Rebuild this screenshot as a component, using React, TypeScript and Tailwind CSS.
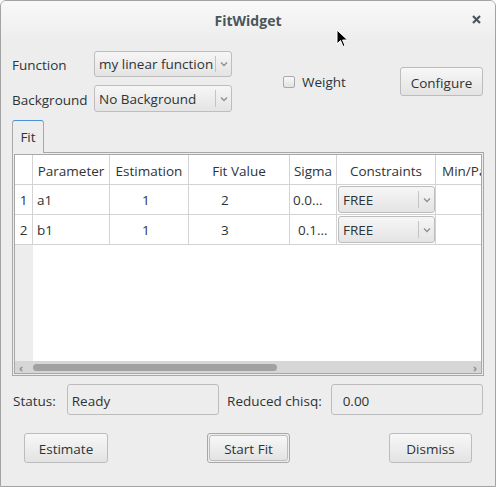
import React from 'react'

const font = { fontFamily: '"Open Sans", "DejaVu Sans", sans-serif' }

function Chevron() {
  return (
    <svg width="8" height="6" viewBox="0 0 8 6" className="text-[#8a8f91]">
      <path d="M1 1.5 L4 4.5 L7 1.5" fill="none" stroke="currentColor" strokeWidth="1.3" />
    </svg>
  )
}

function Combo({ text, className = '' }: { text: string; className?: string }) {
  return (
    <div
      className={`flex items-center rounded-[3px] border border-[#bdbdbd] bg-gradient-to-b from-[#f6f6f6] to-[#e4e4e4] ${className}`}
    >
      <span className="flex-1 whitespace-nowrap pl-[4px] pt-[2px] text-[13.5px] leading-none text-[#2e3436]">{text}</span>
      <span className="h-[70%] w-px bg-[#c4c4c4]" />
      <span className="flex w-[15px] items-center justify-center">
        <Chevron />
      </span>
    </div>
  )
}

function Button({ label, isDefault = false, className = '' }: { label: string; isDefault?: boolean; className?: string }) {
  return (
    <div className={`rounded-[3px] ${isDefault ? 'border border-[#a8a8a8] p-px' : ''} ${className}`}>
      <div className="flex h-full w-full items-center justify-center rounded-[3px] border border-[#bcbcbc] bg-gradient-to-b from-[#f7f7f7] to-[#e3e3e3] pt-[3px] text-[13.5px] text-[#2e3436]">
        {label}
      </div>
    </div>
  )
}

const cols = [
  { label: 'Parameter', w: 'w-[77px]' },
  { label: 'Estimation', w: 'w-[79px]' },
  { label: 'Fit Value', w: 'w-[101px]' },
  { label: 'Sigma', w: 'w-[47px]' },
  { label: 'Constraints', w: 'w-[99px]' },
  { label: 'Min/Parameter', w: 'w-[60px]' },
]

const rows = [
  { n: '1', name: 'a1', est: '1', fit: '2', sigma: '0.0...', sigmaPad: 'pl-[3px]' },
  { n: '2', name: 'b1', est: '1', fit: '3', sigma: '0.1...', sigmaPad: 'pl-[8px]' },
]

export default function App() {
  return (
    <div style={font} className="relative h-[487px] w-[496px] overflow-hidden rounded-t-[6px] border border-[#a3a3a3] bg-[#ededed] text-[#2e3436]">
      {/* title bar */}
      <div className="relative flex h-[40px] items-center justify-center bg-gradient-to-b from-[#f9f9f9] to-[#ededed]">
        <span className="pb-[2px] text-[14px] font-bold text-[#4b565c]">FitWidget</span>
        <svg className="absolute left-[471px] top-[14px]" width="9" height="9" viewBox="0 0 9 9">
          <path d="M1 1 L8 8 M8 1 L1 8" stroke="#4b565c" strokeWidth="2.2" />
        </svg>
        {/* mouse pointer */}
        <svg className="absolute left-[335px] top-[28px]" width="14" height="20" viewBox="0 0 14 20">
          <path d="M1 1 L1 15 L4.5 11.5 L7 17.5 L9 16.6 L6.6 11 L11.5 11 Z" fill="#000" stroke="#fff" strokeWidth="1" />
        </svg>
      </div>

      {/* function / background */}
      <div className="flex items-center pl-[11px] pr-[12px] pt-[10px]">
        <div className="flex flex-col gap-[8px]">
          <div className="flex items-center">
            <span className="w-[82px] pt-[3px] text-[13.5px]">Function</span>
            <Combo text="my linear function" className="h-[26px] w-[138px]" />
          </div>
          <div className="flex items-center">
            <span className="w-[82px] pt-[3px] text-[13.5px]">Background</span>
            <Combo text="No Background" className="h-[27px] w-[138px]" />
          </div>
        </div>
        <div className="ml-[51px] flex items-center gap-[7px]">
          <span className="h-[12px] w-[12px] rounded-[2px] border border-[#a9a9a9] bg-gradient-to-b from-[#f8f8f8] to-[#e2e2e2]" />
          <span className="pt-[2px] text-[13.5px]">Weight</span>
        </div>
        <Button label="Configure" className="ml-auto h-[29px] w-[83px]" />
      </div>

      {/* tab */}
      <div className="mt-[8px] px-[11px]">
        <div className="relative z-10 -mb-px flex h-[33px] w-[32px] items-center justify-center rounded-t-[3px] border border-b-0 border-[#a8a8a8] border-t-[#4a90d9] bg-[#ededed] pt-[1px] text-[13.5px]">
          Fit
        </div>
        <div className="h-[224px] w-[472px] border border-[#a8a8a8] p-px">
          <div className="flex h-full w-full flex-col border border-[#a8a8a8] bg-white">
            <div className="flex flex-1 overflow-hidden">
              {/* vertical header */}
              <div className="flex w-[18px] shrink-0 flex-col bg-[#ededed]">
                <div className="h-[30px] border-b border-r border-[#d3d3d3] bg-white" />
                {rows.map((r) => (
                  <div key={r.n} className="flex h-[30px] items-center justify-center border-b border-r border-[#d3d3d3] bg-white pt-[2px] text-[13.5px]">
                    {r.n}
                  </div>
                ))}
              </div>
              <div className="flex flex-col">
                <div className="flex h-[30px]">
                  {cols.map((c) => (
                    <div key={c.label} className={`${c.w} flex shrink-0 items-center justify-center overflow-hidden whitespace-nowrap border-b border-r border-[#d3d3d3] pt-[3px] text-[13.5px] ${c.label === 'Min/Parameter' ? 'justify-start pl-[6px]' : ''}`}>
                      {c.label}
                    </div>
                  ))}
                </div>
                {rows.map((r) => (
                  <div key={r.n} className="flex h-[30px] text-[13.5px]">
                    <div className="flex w-[77px] items-center border-b border-r border-[#d3d3d3] pl-[4px] pt-[2px]">{r.name}</div>
                    <div className="flex w-[79px] items-center border-b border-r border-[#d3d3d3] pl-[32px] pt-[2px]">{r.est}</div>
                    <div className="flex w-[101px] items-center border-b border-r border-[#d3d3d3] pl-[32px] pt-[2px]">{r.fit}</div>
                    <div className={`flex w-[47px] items-center border-b border-r border-[#d3d3d3] pt-[2px] ${r.sigmaPad}`}>{r.sigma}</div>
                    <div className="flex w-[99px] items-center border-b border-r border-[#d3d3d3] pl-[1px]">
                      <Combo text="FREE" className="h-[27px] w-[97px]" />
                    </div>
                    <div className="w-[60px] border-b border-[#d3d3d3]" />
                  </div>
                ))}
              </div>
            </div>
            {/* horizontal scrollbar */}
            <div className="flex h-[12px] items-center bg-[#d6d6d6]">
              <span className="w-[18px] pl-[4px] text-[11px] font-bold leading-none text-[#8f8f8f]">‹</span>
              <div className="h-[7px] w-[244px] rounded-full bg-[#a1a1a1]" />
              <span className="ml-auto pr-[4px] text-[11px] font-bold leading-none text-[#8f8f8f]">›</span>
            </div>
          </div>
        </div>
      </div>

      {/* status */}
      <div className="mt-[8px] flex items-center px-[12px]">
        <span className="w-[54px] pt-[3px] text-[13.5px]">Status:</span>
        <div className="flex h-[31px] w-[153px] items-center rounded-[3px] border border-[#bcbcbc] pl-[4px] pt-[3px] text-[13.5px]">Ready</div>
        <span className="ml-[8px] w-[104px] pt-[3px] text-[13.5px]">Reduced chisq:</span>
        <div className="flex h-[31px] w-[153px] items-center rounded-[3px] border border-[#bcbcbc] pl-[11px] pt-[3px] text-[13.5px]">0.00</div>
      </div>

      {/* buttons */}
      <div className="mt-[18px] flex items-center pl-[23px]">
        <Button label="Estimate" className="h-[30px] w-[84px]" />
        <Button label="Start Fit" isDefault className="ml-[99px] h-[30px] w-[83px]" />
        <Button label="Dismiss" className="ml-[99px] h-[30px] w-[83px]" />
      </div>
    </div>
  )
}
